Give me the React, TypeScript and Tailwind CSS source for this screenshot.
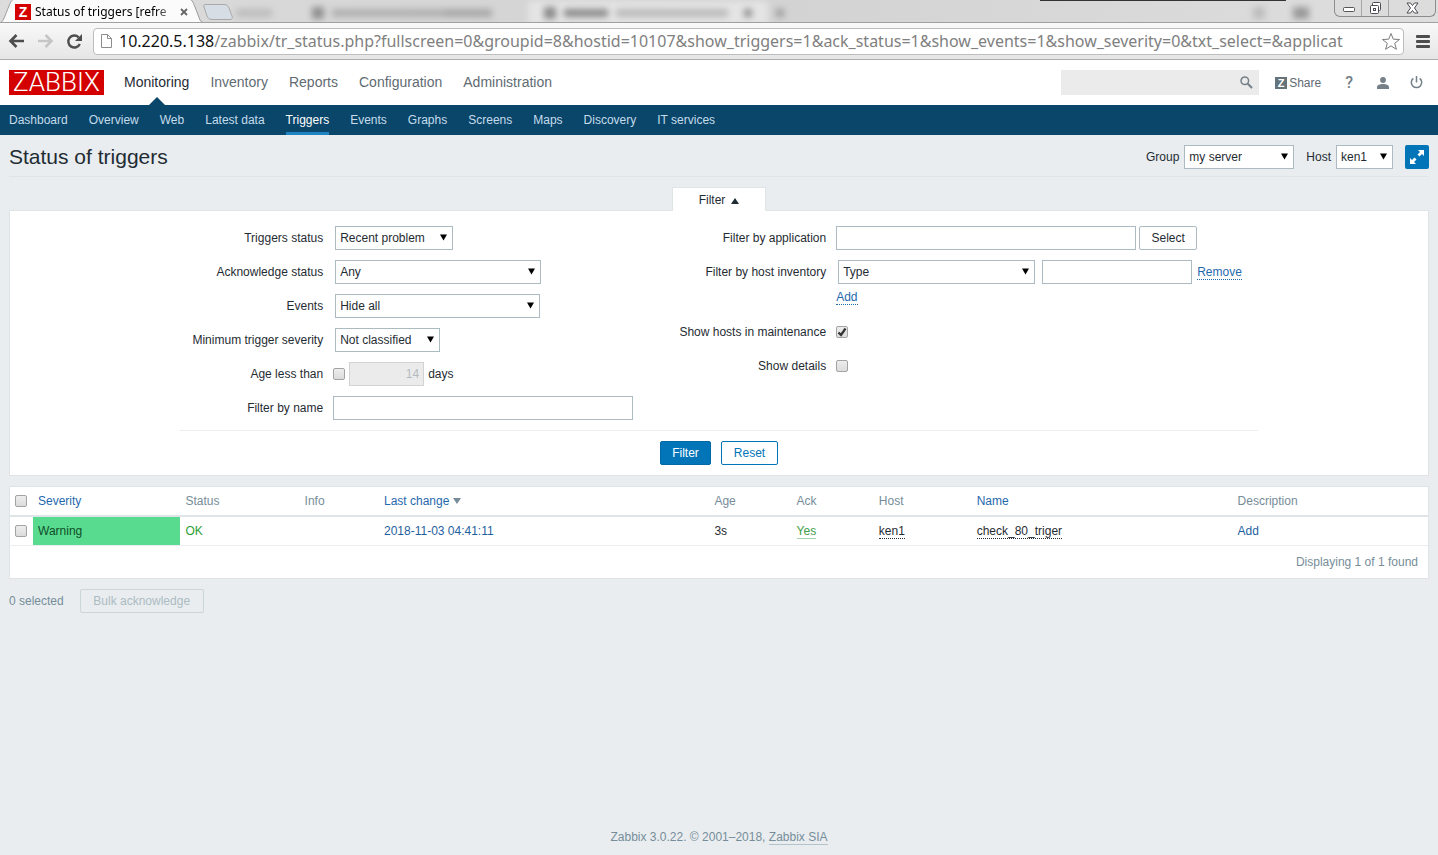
import type { ReactNode } from "react";

const mainMenu = [
  "Monitoring",
  "Inventory",
  "Reports",
  "Configuration",
  "Administration",
];

const subMenu = [
  "Dashboard",
  "Overview",
  "Web",
  "Latest data",
  "Triggers",
  "Events",
  "Graphs",
  "Screens",
  "Maps",
  "Discovery",
  "IT services",
];

const BrowserTabs = () => {
  return (
    <div className="relative flex h-[23px] items-start overflow-hidden border-b border-[#a0a0a0] bg-gradient-to-r from-[#dcdcdc] via-[#d2d2d2] to-[#dedede]">
      {/* inactive tabs, seen through the frosted window frame */}
      <div className="absolute inset-0 blur-[3px]" aria-hidden="true">
        <div className="flex h-full items-center pl-[236px] pt-1">
          <span className="h-2 w-9 bg-[#bcbcbc]"></span>
          <span className="ml-10 h-3 w-3 bg-[#909090]"></span>
          <span className="ml-2 h-2 w-28 bg-[#b0b0b0]"></span>
          <span className="h-2 w-12 bg-[#a8a8a8]"></span>
          <span className="ml-9 flex h-6 w-60 items-center bg-[#e4e4e4] pl-4">
            <span className="h-3 w-3 bg-[#8c8c8c]"></span>
            <span className="ml-2 h-2 w-11 bg-[#8c8c8c]"></span>
            <span className="ml-2 h-2 w-28 bg-[#bbbbbb]"></span>
            <span className="ml-4 h-2 w-2 bg-[#8f8f8f]"></span>
          </span>
          <span className="ml-2 h-2 w-2 bg-[#9d9d9d]"></span>
          <span className="ml-auto h-3 w-3 bg-[#bdbdbd]"></span>
          <span className="ml-7 mr-[129px] h-3 w-4 bg-[#9a9a9a]"></span>
        </div>
      </div>

      <div className="relative flex h-[23px] w-[206px] shrink-0 items-center pl-[15px]">
        <svg
          className="absolute inset-0"
          width="206"
          height="23"
          viewBox="0 0 206 23"
          aria-hidden="true"
        >
          <path
            d="M0 23 C4 21 5 15 9 6 C11 1 12 -1 16 -1 H188 C192 -1 193 2 195 7 L200 20 C201 22 203 23 206 23 Z"
            fill="#fbfbfb"
            stroke="#9b9b9b"
          />
        </svg>
        <span className="relative flex h-4 w-4 items-center justify-center bg-[#d40000] text-sm font-bold text-white">
          Z
        </span>
        <span className="relative ml-1 w-[138px] overflow-hidden whitespace-nowrap bg-gradient-to-r from-black from-85% to-[#c0c0c0] bg-clip-text font-['Noto_Sans',sans-serif] text-xs text-transparent">
          Status of triggers [refre
        </span>
        <button
          type="button"
          aria-label="Close tab"
          className="relative ml-[7px] flex h-4 w-2 items-center"
        >
          <svg width="8" height="8" viewBox="0 0 8 8">
            <path d="M1 1 L7 7 M7 1 L1 7" stroke="#666" strokeWidth="1.8" />
          </svg>
        </button>
      </div>

      <button type="button" aria-label="New tab" className="relative -ml-1">
        <svg width="32" height="22" viewBox="0 0 32 22">
          <path
            d="M2 7 C1 5 2 4.500 4 4.500 H22 C25 4.500 26 6 27 8 L30 16 C31 18 30 19.500 28 19.500 H10 C7 19.500 6 18 5 16 Z"
            fill="#d6dde4"
            stroke="#a9a9a9"
          />
        </svg>
      </button>

      <div className="absolute left-[1040px] top-0 h-px w-[246px] bg-[#333]"></div>

      <div className="relative ml-auto mr-[2px] flex h-[17px] rounded-b-md border border-t-0 border-[#8d8d8d] bg-[#dcdcdc]">
        <button
          type="button"
          aria-label="Minimize"
          className="flex w-[27px] items-center justify-center border-r border-[#a5a5a5]"
        >
          <svg width="13" height="16" viewBox="0 0 13 16">
            <rect x="1.500" y="7.500" width="11" height="4" rx="1" fill="#fff" stroke="#555" />
          </svg>
        </button>
        <button
          type="button"
          aria-label="Restore"
          className="flex w-[27px] items-center justify-center border-r border-[#a5a5a5]"
        >
          <svg width="13" height="14" viewBox="0 0 13 14" fill="#fff" stroke="#4a4a55">
            <rect x="3.500" y="1.500" width="8" height="8" rx="1" />
            <rect x="1.500" y="4.500" width="8" height="8" rx="1" />
            <rect x="4.500" y="7.500" width="2" height="2" />
          </svg>
        </button>
        <button
          type="button"
          aria-label="Close"
          className="flex w-[46px] items-center justify-center"
        >
          <svg width="13" height="12" viewBox="0 0 13 12">
            <path
              d="M1 1 H4.500 L6.500 3.500 L8.500 1 H12 L8.500 6 L12 11 H8.500 L6.500 8.500 L4.500 11 H1 L4.500 6 Z"
              fill="#fff"
              stroke="#4a4a55"
            />
          </svg>
        </button>
      </div>
    </div>
  );
};

const BrowserToolbar = () => {
  return (
    <div className="flex h-[37px] items-center border-b border-[#adadad] bg-gradient-to-b from-[#f9f9f9] to-[#e6e6e6] pl-2 pr-2">
      <button type="button" aria-label="Back">
        <svg width="17" height="16" viewBox="0 0 17 16" fill="none" stroke="#4d4d4d" strokeWidth="2.600">
          <path d="M16 8 H3 M8.500 2 L2.500 8 L8.500 14" />
        </svg>
      </button>
      <button type="button" aria-label="Forward" className="ml-3">
        <svg width="17" height="16" viewBox="0 0 17 16" fill="none" stroke="#c6c6c6" strokeWidth="2.600">
          <path d="M1 8 H14 M8.500 2 L14.500 8 L8.500 14" />
        </svg>
      </button>
      <button type="button" aria-label="Reload" className="ml-3">
        <svg width="17" height="17" viewBox="0 0 17 17">
          <path
            d="M13.800 11 A6 6 0 1 1 12.600 4.300"
            fill="none"
            stroke="#4d4d4d"
            strokeWidth="2.400"
          />
          <path d="M16 1 V8 H9 Z" fill="#4d4d4d" />
        </svg>
      </button>
      <div className="ml-2.5 flex h-[27px] min-w-0 flex-1 items-center rounded-sm border border-[#bdbdbd] bg-white pl-1.5 pr-0.5">
        <svg className="shrink-0" width="13" height="16" viewBox="0 0 13 16" aria-hidden="true">
          <path
            d="M1.500 1.500 H7.500 L11.500 5.500 V14.500 H1.500 Z M7.500 1.500 V5.500 H11.500"
            fill="#fff"
            stroke="#8c8c8c"
          />
        </svg>
        <div className="ml-1.5 min-w-0 flex-1 overflow-hidden whitespace-nowrap font-['Noto_Sans',sans-serif] text-base leading-6 text-[#808080]">
          <span className="text-[#111]">10.220.5.138</span>
          /zabbix/tr_status.php?fullscreen=0&amp;groupid=8&amp;hostid=10107&amp;show_triggers=1&amp;ack_status=1&amp;show_events=1&amp;show_severity=0&amp;txt_select=&amp;applicat
        </div>
        <button type="button" aria-label="Bookmark this page" className="shrink-0">
          <svg width="20" height="19" viewBox="0 0 20 19">
            <path
              d="M10 1.500 L12.300 7.200 L18.500 7.500 L13.700 11.300 L15.400 17.300 L10 13.900 L4.600 17.300 L6.300 11.300 L1.500 7.500 L7.700 7.200 Z"
              fill="#fff"
              stroke="#7c7c7c"
            />
          </svg>
        </button>
      </div>
      <button type="button" aria-label="Menu" className="ml-3">
        <svg width="14" height="13" viewBox="0 0 14 13" fill="#4d4d4d">
          <rect x="0" y="0" width="14" height="3" rx="1" />
          <rect x="0" y="5" width="14" height="3" rx="1" />
          <rect x="0" y="10" width="14" height="3" rx="1" />
        </svg>
      </button>
    </div>
  );
};

const TopBar = () => {
  return (
    <header className="bg-white">
      <div className="flex h-[45px] items-center px-[9px]">
        <a
          href="#"
          className="flex h-[25px] w-[95px] items-center justify-center bg-[#d40000] font-['Roboto',sans-serif] text-[26px] font-light leading-[25px] text-white"
        >
          ZABBIX
        </a>
        <nav className="ml-5 flex h-full gap-[21px] text-sm text-[#5f6b72]">
          {mainMenu.map((item) => (
            <a
              key={item}
              href="#"
              className={
                item === "Monitoring"
                  ? "relative flex items-center pb-0.5 text-[#1f2c33]"
                  : "flex items-center pb-0.5"
              }
            >
              {item}
              {item === "Monitoring" && (
                <svg
                  className="absolute bottom-0 left-1/2 -translate-x-1/2"
                  width="16"
                  height="8"
                  viewBox="0 0 16 8"
                  aria-hidden="true"
                >
                  <path d="M0 8 L8 0 L16 8 Z" fill="#0a466a" />
                </svg>
              )}
            </a>
          ))}
        </nav>
        <div className="ml-auto flex items-center text-xs text-[#5f6b72]">
          <div className="flex h-[25px] w-[198px] items-center bg-[#ebebeb] pr-1.5">
            <input
              type="text"
              aria-label="Search"
              className="h-full min-w-0 flex-1 bg-transparent px-2 outline-none"
            />
            <button type="button" aria-label="Search">
              <svg width="13" height="13" viewBox="0 0 13 13" fill="none" stroke="#768088">
                <circle cx="4.800" cy="4.800" r="3.800" strokeWidth="1.500" />
                <path d="M7.800 7.800 L12 12" strokeWidth="2" />
              </svg>
            </button>
          </div>
          <a href="#" className="ml-4 flex items-center gap-0.5">
            <span className="flex h-3 w-3 items-center justify-center bg-[#65737b] text-[11px] font-bold leading-3 text-white">
              Z
            </span>
            Share
          </a>
          <a
            href="#"
            className="ml-6 font-['Roboto',sans-serif] text-base font-medium text-[#768088]"
          >
            ?
          </a>
          <a href="#" aria-label="Profile" className="ml-6">
            <svg width="12" height="12" viewBox="0 0 12 12" fill="#768088">
              <circle cx="6" cy="3" r="2.900" />
              <path d="M0 12 V10 C0 8 3 7 6 7 C9 7 12 8 12 10 V12 Z" />
            </svg>
          </a>
          <a href="#" aria-label="Sign out" className="ml-[21px] mr-[6px]">
            <svg width="13" height="13" viewBox="0 0 13 13" fill="none" stroke="#768088" strokeWidth="1.500">
              <path d="M6.500 0 V6.500" />
              <path d="M3.300 2.300 A5.200 5.200 0 1 0 9.700 2.300" />
            </svg>
          </a>
        </div>
      </div>
      <nav className="flex h-[30px] gap-[21px] bg-[#0a466a] px-[9px] text-xs text-[#c5dcea]">
        {subMenu.map((item) => (
          <a
            key={item}
            href="#"
            className={
              item === "Triggers"
                ? "flex items-center border-b-3 border-[#1f83c1] pt-[3px] text-white"
                : "flex items-center"
            }
          >
            {item}
          </a>
        ))}
      </nav>
    </header>
  );
};

type SelectProps = {
  id: string;
  value: string;
  width: string;
};

const Select = ({ id, value, width }: SelectProps) => {
  return (
    <span className={"relative flex h-6 " + width}>
      <select
        id={id}
        className="h-full w-full appearance-none border border-[#acbbc2] bg-white pl-1 pr-5 text-xs text-[#1f2c33]"
      >
        <option>{value}</option>
      </select>
      <svg
        className="pointer-events-none absolute right-1.5 top-2"
        width="7"
        height="7"
        viewBox="0 0 7 7"
        aria-hidden="true"
      >
        <path d="M0 0.500 H7 L3.500 6.500 Z" fill="#000" />
      </svg>
    </span>
  );
};

type CheckboxProps = {
  id: string;
  label?: string;
  checked?: boolean;
};

const Checkbox = ({ id, label, checked }: CheckboxProps) => {
  return (
    <span className="relative flex h-3 w-3">
      <input
        id={id}
        type="checkbox"
        aria-label={label}
        defaultChecked={checked}
        className="peer h-3 w-3 appearance-none rounded-xs border border-[#a3a3a3] bg-gradient-to-b from-[#ededed] to-[#dcdcdc]"
      />
      <svg
        className="pointer-events-none absolute left-0 top-0 hidden peer-checked:block"
        width="12"
        height="12"
        viewBox="0 0 12 12"
        aria-hidden="true"
      >
        <path d="M2.500 6.500 L5 9 L9.500 2.500" fill="none" stroke="#333" strokeWidth="2.200" />
      </svg>
    </span>
  );
};

type RowProps = {
  id: string;
  label: string;
  labelWidth: string;
  children: ReactNode;
};

const Row = ({ id, label, labelWidth, children }: RowProps) => {
  return (
    <div className="flex h-6 items-center">
      <label htmlFor={id} className={"shrink-0 text-right " + labelWidth}>
        {label}
      </label>
      <div className="ml-2.5 flex items-center">{children}</div>
    </div>
  );
};

const textInput = "h-6 border border-[#acbbc2] bg-white px-1";
const dottedLink = "border-b border-dotted border-current leading-[14px]";

const Filter = () => {
  const left = "w-[143px]";
  const right = "w-[153px]";

  return (
    <section className="mt-2.5">
      <div className="flex justify-center">
        <button
          type="button"
          className="relative z-10 -mb-px flex h-6 w-[94px] items-center justify-center gap-1.5 border border-b-0 border-[#dfe4e7] bg-white"
        >
          Filter
          <svg className="mt-0.5" width="8" height="6" viewBox="0 0 8 6" aria-hidden="true">
            <path d="M0 6 L4 0 L8 6 Z" fill="#1f2c33" />
          </svg>
        </button>
      </div>
      <div className="border border-[#dfe4e7] bg-white pb-2.5 pt-[15px]">
        <form className="mx-auto w-[76%]">
          <div className="flex gap-10 pb-2.5">
            <div className="flex flex-col gap-2.5">
              <Row id="status" label="Triggers status" labelWidth={left}>
                <span className="w-0.5"></span>
                <Select id="status" value="Recent problem" width="w-[118px]" />
              </Row>
              <Row id="ack" label="Acknowledge status" labelWidth={left}>
                <span className="w-0.5"></span>
                <Select id="ack" value="Any" width="w-[206px]" />
              </Row>
              <Row id="events" label="Events" labelWidth={left}>
                <span className="w-0.5"></span>
                <Select id="events" value="Hide all" width="w-[205px]" />
              </Row>
              <Row id="severity" label="Minimum trigger severity" labelWidth={left}>
                <span className="w-0.5"></span>
                <Select id="severity" value="Not classified" width="w-[105px]" />
              </Row>
              <Row id="age" label="Age less than" labelWidth={left}>
                <Checkbox id="age" />
                <input
                  type="text"
                  aria-label="Days"
                  defaultValue="14"
                  disabled
                  className="ml-1 h-6 w-[75px] border border-[#d3d3d3] bg-[#ebebeb] px-1 text-right text-[#b4bbbf]"
                />
                <span className="ml-1">days</span>
              </Row>
              <Row id="name" label="Filter by name" labelWidth={left}>
                <input id="name" type="text" className={textInput + " w-[300px]"} />
              </Row>
            </div>

            <div className="flex flex-col gap-2.5">
              <Row id="application" label="Filter by application" labelWidth={right}>
                <input id="application" type="text" className={textInput + " w-[300px]"} />
                <button
                  type="button"
                  className="ml-[3px] h-6 w-[58px] rounded-xs border border-[#acbbc2] bg-white"
                >
                  Select
                </button>
              </Row>
              <div>
                <Row id="inventory" label="Filter by host inventory" labelWidth={right}>
                  <span className="w-0.5"></span>
                  <Select id="inventory" value="Type" width="w-[197px]" />
                  <input
                    type="text"
                    aria-label="Inventory value"
                    className={textInput + " ml-[7px] w-[150px]"}
                  />
                  <button type="button" className={dottedLink + " ml-[5px] text-[#1f69ad]"}>
                    Remove
                  </button>
                </Row>
                <div className="ml-[163px] flex h-[26px] items-center">
                  <button type="button" className={dottedLink + " text-[#1f69ad]"}>
                    Add
                  </button>
                </div>
              </div>
              <Row id="maintenance" label="Show hosts in maintenance" labelWidth={right}>
                <Checkbox id="maintenance" checked />
              </Row>
              <Row id="details" label="Show details" labelWidth={right}>
                <Checkbox id="details" />
              </Row>
            </div>
          </div>
          <div className="flex justify-center gap-2.5 border-t border-[#ebeef0] pt-2.5">
            <button
              type="button"
              className="h-6 w-[51px] rounded-xs border border-[#0268a6] bg-[#0275b8] text-white"
            >
              Filter
            </button>
            <button
              type="button"
              className="h-6 w-[57px] rounded-xs border border-[#0275b8] bg-white text-[#0275b8]"
            >
              Reset
            </button>
          </div>
        </form>
      </div>
    </section>
  );
};

const TriggerTable = () => {
  return (
    <section className="mt-2.5 border border-[#dfe4e7] bg-white">
      <table className="w-full table-fixed text-left">
        <thead>
          <tr className="h-[29px] border-b-2 border-[#dfe4e7] text-[#768d99] *:font-normal">
            <th className="w-[23px] pl-[5px]">
              <Checkbox id="all" label="Select all" />
            </th>
            <th className="w-[10.4%] pl-[5px]">
              <a href="#" className="text-[#1f69ad]">
                Severity
              </a>
            </th>
            <th className="w-[8.4%] pl-[5px]">Status</th>
            <th className="w-[5.6%] pl-[5px]">Info</th>
            <th className="w-[23.3%] pl-[5px]">
              <a href="#" className="flex items-center gap-1 text-[#1f69ad]">
                Last change
                <svg width="8" height="6" viewBox="0 0 8 6" aria-hidden="true">
                  <path d="M0 0 H8 L4 6 Z" fill="#768d99" />
                </svg>
              </a>
            </th>
            <th className="w-[5.8%] pl-[5px]">Age</th>
            <th className="w-[5.8%] pl-[5px]">Ack</th>
            <th className="w-[6.9%] pl-[5px]">Host</th>
            <th className="w-[18.4%] pl-[5px]">
              <a href="#" className="text-[#1f69ad]">
                Name
              </a>
            </th>
            <th className="pl-[5px]">Description</th>
          </tr>
        </thead>
        <tbody>
          <tr className="h-[29px] border-b border-[#ebeef0] *:pl-[5px]">
            <td>
              <Checkbox id="row-1" label="Select check_80_triger" />
            </td>
            <td className="bg-[#59db8f] text-[#0f4d29]">Warning</td>
            <td className="text-[#2f9e37]">OK</td>
            <td></td>
            <td>
              <a href="#" className="text-[#1f5f9f]">
                2018-11-03 04:41:11
              </a>
            </td>
            <td>3s</td>
            <td>
              <a href="#" className="border-b border-[#a9d3ab] text-[#429e47]">
                Yes
              </a>
            </td>
            <td>
              <button type="button" className={dottedLink}>
                ken1
              </button>
            </td>
            <td>
              <button type="button" className={dottedLink}>
                check_80_triger
              </button>
            </td>
            <td>
              <a href="#" className="text-[#1f5f9f]">
                Add
              </a>
            </td>
          </tr>
        </tbody>
      </table>
      <div className="flex h-8 items-center justify-end pr-2.5 text-[#768d99]">
        Displaying 1 of 1 found
      </div>
    </section>
  );
};

export default function App() {
  return (
    <div className="flex min-h-screen flex-col bg-[#e9edf0] font-['Liberation_Sans',Arial,sans-serif] text-xs text-[#1f2c33]">
      <BrowserTabs />
      <BrowserToolbar />
      <TopBar />
      <main className="px-[9px]">
        <div className="flex h-[42px] items-center border-b border-[#dfe4e7] pt-[3px]">
          <h1 className="text-[21px]">Status of triggers</h1>
          <div className="ml-auto flex items-center">
            <label htmlFor="group" className="mr-[5px]">
              Group
            </label>
            <Select id="group" value="my server" width="w-[110px]" />
            <label htmlFor="host" className="ml-3 mr-[5px]">
              Host
            </label>
            <Select id="host" value="ken1" width="w-[57px]" />
            <button
              type="button"
              aria-label="Fullscreen"
              className="ml-3 flex h-6 w-6 items-center justify-center rounded-xs bg-[#0275b8]"
            >
              <svg width="16" height="16" viewBox="0 0 16 16" fill="#fff">
                <path d="M9 1 H15 V7 L13 5 L10.500 7.500 L8.500 5.500 L11 3 Z" />
                <path d="M1 9 L3 11 L5.500 8.500 L7.500 10.500 L5 13 L7 15 H1 Z" />
              </svg>
            </button>
          </div>
        </div>
        <Filter />
        <TriggerTable />
        <div className="mt-2.5 flex items-center text-[#768d99]">
          <span>0 selected</span>
          <button
            type="button"
            disabled
            className="ml-4 h-6 w-[124px] rounded-xs border border-[#ccd5d9] text-[#acbbc2]"
          >
            Bulk acknowledge
          </button>
        </div>
      </main>
      <footer className="mt-auto pb-2.5 text-center text-[#768d99]">
        Zabbix 3.0.22. © 2001–2018,{" "}
        <a href="#" className="border-b border-[#b4c3cb]">
          Zabbix SIA
        </a>
      </footer>
    </div>
  );
}
